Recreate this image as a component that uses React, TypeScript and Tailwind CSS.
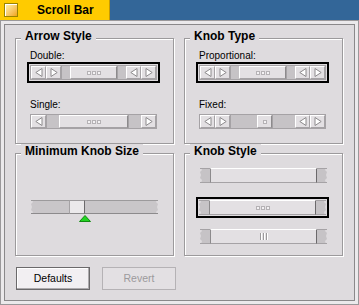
import React from "react";

const BG = "bg-[#dedbde]";

function Arrow({ dir }: { dir: "l" | "r" }) {
  return (
    <div className="w-[15px] h-full flex items-center justify-center bg-[#e3e0e3] border-t border-l border-t-white border-l-white border-r border-b border-r-[#a5a2a5] border-b-[#a5a2a5]">
      <svg width="8" height="9" viewBox="0 0 8 9">
        {dir === "l" ? (
          <path d="M7 0.5 L0.8 4.5 L7 8.5 Z" fill="#fff" stroke="#8c8a8c" strokeWidth="1" />
        ) : (
          <path d="M1 0.5 L7.2 4.5 L1 8.5 Z" fill="#fff" stroke="#8c8a8c" strokeWidth="1" />
        )}
      </svg>
    </div>
  );
}

function Trough({ w }: { w: number }) {
  return <div className="h-full bg-[#c6c3c6] border-l border-l-[#a5a2a5]" style={{ width: w }} />;
}

function Grip({ n = 3 }: { n?: number }) {
  return (
    <div className="flex gap-[1px]">
      {Array.from({ length: n }).map((_, i) => (
        <div key={i} className="w-[4px] h-[4px] border border-[#b5b2b5] bg-[#f4f2f4]" />
      ))}
    </div>
  );
}

function Knob({ w, grip = 3 }: { w: number; grip?: number }) {
  return (
    <div
      className="h-full flex items-center justify-center bg-[#e3e0e3] border-t border-l border-t-white border-l-white border-r border-b border-r-[#8c8a8c] border-b-[#a5a2a5]"
      style={{ width: w }}
    >
      <Grip n={grip} />
    </div>
  );
}

function Bar({ children }: { children: React.ReactNode }) {
  return <div className="w-[127px] h-[15px] flex border border-[#a5a2a5]">{children}</div>;
}

function Selected({ children, className = "" }: { children: React.ReactNode; className?: string }) {
  return <div className={"self-start border-2 border-black p-[1px] " + className}>{children}</div>;
}

function Group({ title, h, children }: { title: string; h: string; children?: React.ReactNode }) {
  return (
    <div className={"border border-[#9c9a9c] shadow-[inset_1px_1px_0_#fff,1px_1px_0_#fff] flex flex-col " + h}>
      <div className={"-mt-[10px] ml-[5px] self-start px-[4px] text-[12px] font-bold leading-[14px] h-[14px] " + BG}>
        {title}
      </div>
      {children}
    </div>
  );
}

function Label({ children, className = "" }: { children: React.ReactNode; className?: string }) {
  return <div className={"ml-[14px] text-[10px] leading-[12px] h-[12px] " + className}>{children}</div>;
}

function TornEnd({ side, h = 15, fill = "#c6c3c6", top = "#a5a2a5", bottom = "#a5a2a5" }: { side: "l" | "r"; h?: number; fill?: string; top?: string; bottom?: string }) {
  const pts =
    side === "l"
      ? `10,0 1,0 2,2 0,4 1,7 0,10 2,12 1,${h} 10,${h}`
      : `0,0 9,0 8,2 10,4 9,7 10,10 8,12 9,${h} 0,${h}`;
  return (
    <svg width="10" height={h} viewBox={`0 0 10 ${h}`} className="block">
      <polygon points={pts} fill={fill} />
      <line x1="0" y1="0.5" x2="10" y2="0.5" stroke={top} />
      <line x1="0" y1={h - 0.5} x2="10" y2={h - 0.5} stroke={bottom} />
    </svg>
  );
}

function StyleSample({ kind }: { kind: "plain" | "dots" | "lines" }) {
  return (
    <div className="flex h-[15px] w-[127px]">
      <TornEnd side="l" />
      <div className="flex-1 h-full flex items-center justify-center bg-[#e3e0e3] border-l border-l-[#8c8a8c] border-t border-t-white border-b border-b-[#a5a2a5] border-r border-r-[#6b696b]">
        {kind === "dots" && <Grip n={3} />}
        {kind === "lines" && (
          <div className="flex gap-[2px]">
            {[0, 1, 2].map((i) => (
              <div key={i} className="w-[1px] h-[7px] bg-[#9c9a9c] shadow-[1px_0_0_#fff]" />
            ))}
          </div>
        )}
      </div>
      <TornEnd side="r" />
    </div>
  );
}

function Slider() {
  return (
    <div className="ml-[15px] mt-[42px] flex flex-col">
      <div className="flex h-[14px] w-[127px]">
        <TornEnd side="l" h={14} fill="#c9c6c9" top="#9c9a9c" bottom="#8c8a8c" />
        <div className="w-[28px] h-full bg-[#c9c6c9] border-t border-t-[#9c9a9c] border-b border-b-[#8c8a8c]" />
        <div className="w-[16px] h-full bg-[#ebe9eb] border-l border-l-[#a5a2a5] border-t border-t-[#9c9a9c] border-b border-b-[#8c8a8c] border-r border-r-[#6b696b]" />
        <div className="flex-1 h-full bg-[#c9c6c9] border-t border-t-[#9c9a9c] border-b border-b-[#8c8a8c]" />
        <TornEnd side="r" h={14} fill="#c9c6c9" top="#9c9a9c" bottom="#8c8a8c" />
      </div>
      <svg width="12" height="7" viewBox="0 0 12 7" className="ml-[48px] mt-[1px] block">
        <polygon points="6,0.5 11.5,6.5 0.5,6.5" fill="#22d422" stroke="#118a11" strokeWidth="1" />
      </svg>
    </div>
  );
}

function Button({ children, disabled }: { children: React.ReactNode; disabled?: boolean }) {
  return (
    <div
      className={
        "w-[74px] h-[23px] flex items-center justify-center text-[10.5px] " +
        (disabled
          ? "border border-[#b5b2b5] bg-[#e3e0e3] text-[#9c9a9c]"
          : "border border-[#6b696b] bg-[#f2eff2] shadow-[inset_-1px_-1px_0_#adaaad,inset_1px_1px_0_#fff] text-black")
      }
    >
      {children}
    </div>
  );
}

export default function App() {
  return (
    <div className="w-[359px] h-[305px] bg-[#336698] font-['Liberation_Sans',Arial,sans-serif] text-black overflow-hidden">
      <div className="flex h-[20px]">
        <div className="w-[110px] h-full bg-[#ffcb00] border-r border-r-[#c89a00] flex items-center">
          <div className="ml-[4px] w-[14px] h-[14px] border border-[#9c8400] bg-linear-to-br from-[#fff6b0] to-[#f0a400] shadow-[inset_1px_1px_0_#fff]" />
          <div className="ml-[19px] text-[12px] font-bold leading-[14px]">Scroll Bar</div>
        </div>
      </div>
      <div className="h-[285px] border border-[#9a989a] bg-[#ebe9eb] p-[3px]">
        <div className={"h-full border border-[#8a888a] pt-[13px] pl-[10px] pr-[9px] " + BG}>
          <div className="grid grid-cols-[159px_159px] gap-x-[10px] gap-y-[9px]">
            <Group title="Arrow Style" h="h-[106px]">
              <Label className="mt-[7px]">Double:</Label>
              <Selected className="ml-[11px]">
                <Bar>
                  <Arrow dir="l" />
                  <Arrow dir="r" />
                  <Trough w={9} />
                  <Knob w={47} />
                  <Trough w={9} />
                  <Arrow dir="l" />
                  <Arrow dir="r" />
                </Bar>
              </Selected>
              <Label className="mt-[16px]">Single:</Label>
              <div className="ml-[14px] mt-[3px]">
                <Bar>
                  <Arrow dir="l" />
                  <Trough w={13} />
                  <Knob w={69} />
                  <Trough w={13} />
                  <Arrow dir="r" />
                </Bar>
              </div>
            </Group>
            <Group title="Knob Type" h="h-[106px]">
              <Label className="mt-[7px]">Proportional:</Label>
              <Selected className="ml-[11px]">
                <Bar>
                  <Arrow dir="l" />
                  <Arrow dir="r" />
                  <Trough w={9} />
                  <Knob w={47} />
                  <Trough w={9} />
                  <Arrow dir="l" />
                  <Arrow dir="r" />
                </Bar>
              </Selected>
              <Label className="mt-[16px]">Fixed:</Label>
              <div className="ml-[14px] mt-[3px]">
                <Bar>
                  <Arrow dir="l" />
                  <Arrow dir="r" />
                  <Trough w={27} />
                  <Knob w={15} grip={1} />
                  <Trough w={23} />
                  <Arrow dir="l" />
                  <Arrow dir="r" />
                </Bar>
              </div>
            </Group>
            <Group title="Minimum Knob Size" h="h-[103px]">
              <Slider />
            </Group>
            <Group title="Knob Style" h="h-[103px]">
              <div className="ml-[15px] mt-[10px]">
                <StyleSample kind="plain" />
              </div>
              <Selected className="ml-[11px] mt-[14px]">
                <StyleSample kind="dots" />
              </Selected>
              <div className="ml-[15px] mt-[11px]">
                <StyleSample kind="lines" />
              </div>
            </Group>
          </div>
          <div className="flex gap-[12px] mt-[11px] ml-[1px]">
            <Button>Defaults</Button>
            <Button disabled>Revert</Button>
          </div>
        </div>
      </div>
    </div>
  );
}
